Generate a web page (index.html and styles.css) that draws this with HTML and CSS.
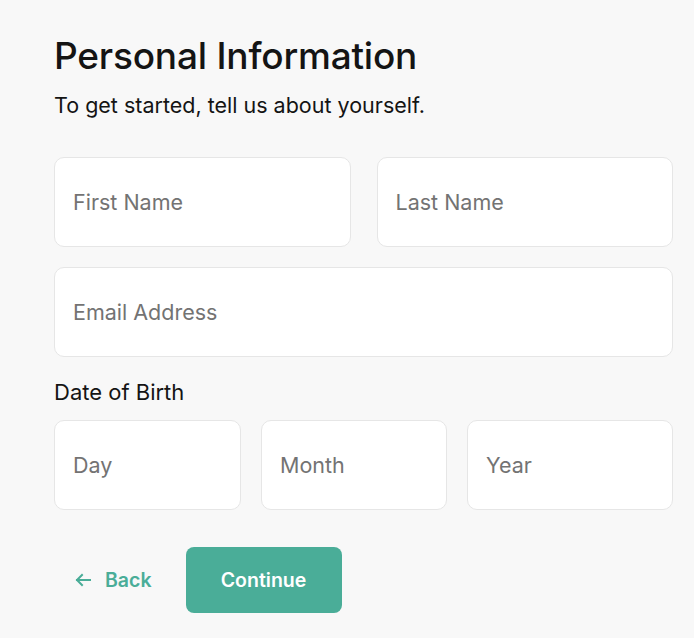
FILE: index.html
```html
<!DOCTYPE html>
<html>
<head>
<meta charset="utf-8">
<link rel="stylesheet" href="styles.css">
</head>
<body>
<main class="page">
  <h1 class="title">Personal Information</h1>
  <p class="subtitle">To get started, tell us about yourself.</p>
  <form class="form">
    <div class="row two">
      <input class="field" type="text" placeholder="First Name">
      <input class="field" type="text" placeholder="Last Name">
    </div>
    <div class="row">
      <input class="field" type="email" placeholder="Email Address">
    </div>
    <div class="label">Date of Birth</div>
    <div class="row three">
      <input class="field" type="text" placeholder="Day">
      <input class="field" type="text" placeholder="Month">
      <input class="field" type="text" placeholder="Year">
    </div>
    <div class="actions">
      <button type="button" class="back">
        <svg class="arrow" width="16" height="14" viewBox="0 0 16 14" fill="none" stroke="currentColor" stroke-width="2" stroke-linecap="square"><path d="M15 7H2M7 2L2 7l5 5"/></svg>
        <span>Back</span>
      </button>
      <button type="button" class="continue">Continue</button>
    </div>
  </form>
</main>
</body>
</html>
```
FILE: styles.css
```css
html, body {
  margin: 0;
  padding: 0;
  background: #f8f8f8;
}
body {
  font-family: Inter, "Liberation Sans", sans-serif;
  color: #141414;
}
.page {
  width: 619px;
  padding: 34px 0 0 54px;
}
.title {
  margin: 0;
  font-size: 37px;
  font-weight: 500;
  line-height: 44px;
  letter-spacing: -0.2px;
}
.subtitle {
  margin: 13px 0 0;
  font-size: 21.5px;
  line-height: 28px;
}
.form {
  margin-top: 38px;
  display: flex;
  flex-direction: column;
}
.row {
  display: grid;
  grid-template-columns: 1fr;
  gap: 26px;
  margin-bottom: 20px;
}
.row.two {
  grid-template-columns: 1fr 1fr;
}
.row.three {
  grid-template-columns: 187px 186px 1fr;
  gap: 20px;
  margin-bottom: 0;
}
.field {
  box-sizing: border-box;
  height: 90px;
  width: 100%;
  border: 1px solid #e6e6e6;
  border-radius: 10px;
  background: #fff;
  padding: 0 18px;
  font-family: inherit;
  font-size: 21.5px;
  color: #141414;
  outline: none;
}
.field::placeholder {
  color: #737373;
}
.label {
  font-size: 22px;
  line-height: 28px;
  margin: 1px 0 14px;
}
.actions {
  display: flex;
  align-items: center;
  margin-top: 37px;
  gap: 34px;
}
.back {
  display: flex;
  align-items: center;
  gap: 14px;
  border: none;
  background: none;
  padding: 0 0 0 21px;
  color: #4aad98;
  font-family: inherit;
  font-size: 19.5px;
  font-weight: 600;
  cursor: pointer;
}
.continue {
  width: 156px;
  height: 66px;
  border: none;
  border-radius: 8px;
  background: #4aad98;
  color: #fff;
  font-family: inherit;
  font-size: 19.5px;
  font-weight: 600;
  cursor: pointer;
}
```
